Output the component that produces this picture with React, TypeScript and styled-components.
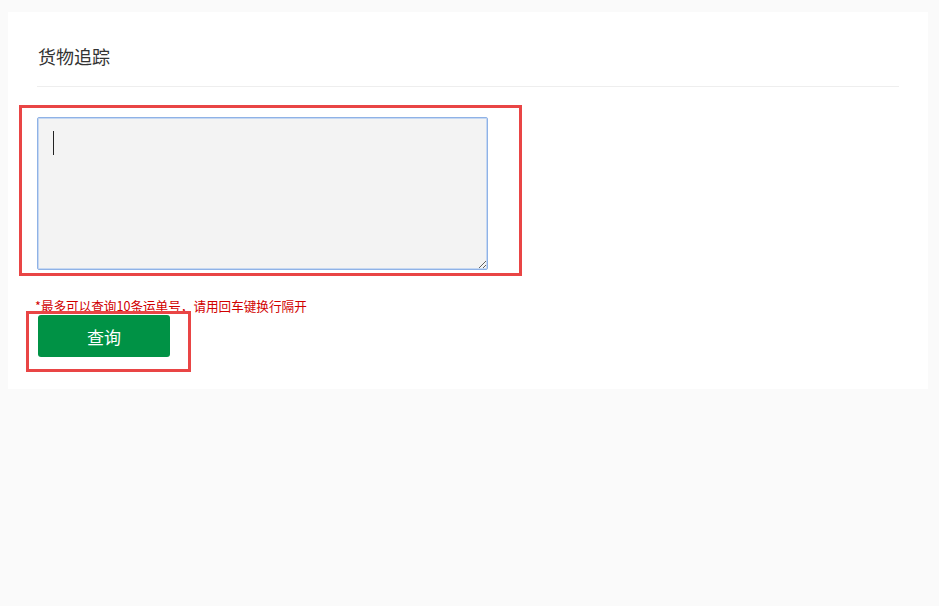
import React from 'react'
import styled, { createGlobalStyle } from 'styled-components'

const GlobalStyle = createGlobalStyle`
    html, body {
        margin: 0;
        padding: 0;
        background-color: #fafafa;
        font-family: 'Noto Sans CJK SC', 'Liberation Sans', sans-serif;
    }
`
const Page = styled.div`
    padding: 12px 11px 0 8px;
    min-height: 606px;
    box-sizing: border-box;
`
const Card = styled.div`
    background-color: #ffffff;
    padding: 0 29px 32px 29px;
`
const Header = styled.div`
    height: 75px;
    display: flex;
    align-items: center;
    padding-top: 14px;
    box-sizing: border-box;
    border-bottom: 1px solid #eeeeee;
`
const Title = styled.h3`
    margin: 0 0 0 1px;
    font-size: 18px;
    font-weight: normal;
    color: #333333;
`
const Form = styled.div`
    display: flex;
    flex-direction: column;
    align-items: flex-start;
    padding-top: 30px;
`
const Field = styled.div`
    position: relative;
    display: flex;
`
const Highlight = styled.div<{ $top: number; $right: number; $bottom: number; $left: number }>`
    position: absolute;
    top: ${p => p.$top}px;
    right: ${p => p.$right}px;
    bottom: ${p => p.$bottom}px;
    left: ${p => p.$left}px;
    border: 3px solid #e94545;
    pointer-events: none;
`
const Input = styled.textarea`
    width: 451px;
    height: 153px;
    box-sizing: border-box;
    padding: 12px 14px;
    font-size: 20px;
    line-height: 24px;
    background-color: #f3f3f3;
    border: 1px solid #8fb2e6;
    box-shadow: 0 0 0 1px #c6d8f2 inset;
    border-radius: 2px;
    outline: none;
    resize: both;
    font-family: inherit;
`
const Caret = styled.span`
    position: absolute;
    left: 16px;
    top: 14px;
    width: 1px;
    height: 24px;
    background-color: #222222;
`
const Hint = styled.p`
    margin: 27px 0 0 -2px;
    font-size: 12.6px;
    line-height: 17px;
    color: #d10000;
`
const Action = styled.div`
    position: relative;
    margin-top: 1px;
    margin-left: 1px;
`
const Button = styled.button`
    width: 132px;
    height: 42px;
    border: none;
    border-radius: 3px;
    background-color: #009245;
    color: #ffffff;
    font-size: 17px;
    font-family: inherit;
    cursor: pointer;
`

const App = () => {
    return (
        <>
            <GlobalStyle />
            <Page>
                <Card>
                    <Header>
                        <Title>货物追踪</Title>
                    </Header>
                    <Form>
                        <Field>
                            <Input />
                            <Caret />
                            <Highlight $top={-12} $right={-34} $bottom={-6} $left={-18} />
                        </Field>
                        <Hint>*最多可以查询10条运单号，请用回车键换行隔开</Hint>
                        <Action>
                            <Button>查询</Button>
                            <Highlight $top={-4} $right={-21} $bottom={-15} $left={-12} />
                        </Action>
                    </Form>
                </Card>
            </Page>
        </>
    )
}

export default App
